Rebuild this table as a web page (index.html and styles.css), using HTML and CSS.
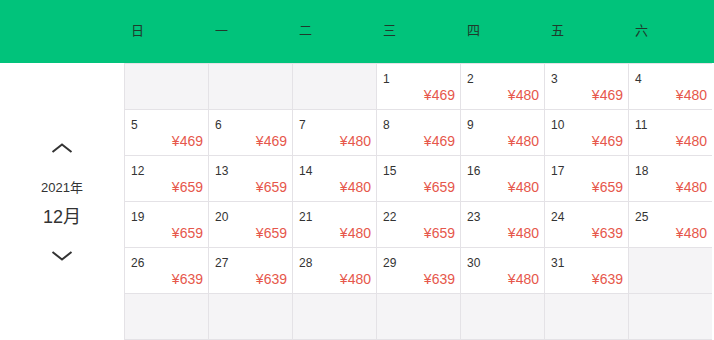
FILE: index.html
```html
<!DOCTYPE html>
<html lang="zh-CN">
<head>
<meta charset="utf-8">
<title>价格日历</title>
<link rel="stylesheet" href="styles.css">
</head>
<body>
<div class="cal">
  <div class="head">
    <div class="head-side"></div>
    <div class="wd">日</div><div class="wd">一</div><div class="wd">二</div><div class="wd">三</div><div class="wd">四</div><div class="wd">五</div><div class="wd">六</div>
  </div>
  <div class="main">
    <div class="side">
      <svg class="chev up" width="22" height="10" viewBox="0 0 22 10"><polyline points="1.5,9 11,1.5 20.5,9" fill="none" stroke="#333" stroke-width="2"/></svg>
      <div class="year">2021年</div>
      <div class="month">12月</div>
      <svg class="chev down" width="22" height="10" viewBox="0 0 22 10"><polyline points="1.5,1 11,8.5 20.5,1" fill="none" stroke="#333" stroke-width="2"/></svg>
    </div>
    <div class="grid">
      <div class="cell empty"></div>
      <div class="cell empty"></div>
      <div class="cell empty"></div>
      <div class="cell"><span class="d">1</span><span class="p">¥469</span></div>
      <div class="cell"><span class="d">2</span><span class="p">¥480</span></div>
      <div class="cell"><span class="d">3</span><span class="p">¥469</span></div>
      <div class="cell"><span class="d">4</span><span class="p">¥480</span></div>

      <div class="cell"><span class="d">5</span><span class="p">¥469</span></div>
      <div class="cell"><span class="d">6</span><span class="p">¥469</span></div>
      <div class="cell"><span class="d">7</span><span class="p">¥480</span></div>
      <div class="cell"><span class="d">8</span><span class="p">¥469</span></div>
      <div class="cell"><span class="d">9</span><span class="p">¥480</span></div>
      <div class="cell"><span class="d">10</span><span class="p">¥469</span></div>
      <div class="cell"><span class="d">11</span><span class="p">¥480</span></div>

      <div class="cell"><span class="d">12</span><span class="p">¥659</span></div>
      <div class="cell"><span class="d">13</span><span class="p">¥659</span></div>
      <div class="cell"><span class="d">14</span><span class="p">¥480</span></div>
      <div class="cell"><span class="d">15</span><span class="p">¥659</span></div>
      <div class="cell"><span class="d">16</span><span class="p">¥480</span></div>
      <div class="cell"><span class="d">17</span><span class="p">¥659</span></div>
      <div class="cell"><span class="d">18</span><span class="p">¥480</span></div>

      <div class="cell"><span class="d">19</span><span class="p">¥659</span></div>
      <div class="cell"><span class="d">20</span><span class="p">¥659</span></div>
      <div class="cell"><span class="d">21</span><span class="p">¥480</span></div>
      <div class="cell"><span class="d">22</span><span class="p">¥659</span></div>
      <div class="cell"><span class="d">23</span><span class="p">¥480</span></div>
      <div class="cell"><span class="d">24</span><span class="p">¥639</span></div>
      <div class="cell"><span class="d">25</span><span class="p">¥480</span></div>

      <div class="cell"><span class="d">26</span><span class="p">¥639</span></div>
      <div class="cell"><span class="d">27</span><span class="p">¥639</span></div>
      <div class="cell"><span class="d">28</span><span class="p">¥480</span></div>
      <div class="cell"><span class="d">29</span><span class="p">¥639</span></div>
      <div class="cell"><span class="d">30</span><span class="p">¥480</span></div>
      <div class="cell"><span class="d">31</span><span class="p">¥639</span></div>
      <div class="cell empty"></div>

      <div class="cell empty"></div>
      <div class="cell empty"></div>
      <div class="cell empty"></div>
      <div class="cell empty"></div>
      <div class="cell empty"></div>
      <div class="cell empty"></div>
      <div class="cell empty"></div>
    </div>
  </div>
</div>
</body>
</html>
```
FILE: styles.css
```css
html, body {
  margin: 0;
  padding: 0;
  background: #fff;
}
body {
  font-family: "Liberation Sans", "Noto Sans CJK SC", sans-serif;
  color: #333;
  width: 714px;
  height: 340px;
  overflow: hidden;
}
.head {
  display: flex;
  height: 63px;
  background: #01c37b;
}
.head-side {
  width: 124px;
  flex: none;
}
.wd {
  width: 84px;
  flex: none;
  box-sizing: border-box;
  padding-left: 7px;
  line-height: 62px;
  font-size: 13px;
  color: #1f3a2c;
}
.main {
  display: flex;
}
.side {
  width: 124px;
  flex: none;
  display: flex;
  flex-direction: column;
  align-items: center;
  justify-content: center;
}
.chev {
  display: block;
}
.year {
  margin-top: 27px;
  font-size: 13px;
  line-height: 16px;
  color: #333;
}
.month {
  margin-top: 9px;
  font-size: 18px;
  line-height: 24px;
  color: #333;
}
.chev.down {
  margin-top: 22px;
}
.grid {
  display: grid;
  grid-template-columns: repeat(7, 84px);
  grid-auto-rows: 46px;
  border-bottom: 1px solid #e4e2e6;
}
.cell {
  box-sizing: border-box;
  border-left: 1px solid #e4e2e6;
  border-top: 1px solid #e4e2e6;
  padding: 7px 5px 0 6px;
  display: flex;
  flex-direction: column;
}
.cell.empty {
  background: #f5f4f6;
}
.d {
  font-size: 12px;
  line-height: 16px;
  color: #333;
}
.p {
  font-size: 14px;
  line-height: 16px;
  color: #e6574b;
  text-align: right;
}
```
